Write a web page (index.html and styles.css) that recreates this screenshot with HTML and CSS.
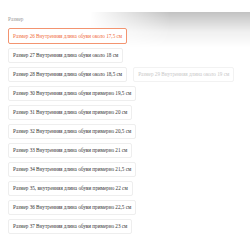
FILE: index.html
```html
<!DOCTYPE html>
<html lang="ru">
<head>
    <meta charset="UTF-8">
    <meta name="viewport" content="width=device-width, initial-scale=1.0">
    <title>Размер</title>
    <link rel="stylesheet" href="styles.css">
</head>
<body>
    <div class="shade"></div>
    <div class="sku">
        <div class="sku-title">Размер</div>
        <div class="sku-list">
            <div class="sku-item active">Размер 26 Внутренняя длина обуви около 17,5 см</div>
            <div class="sku-item">Размер 27 Внутренняя длина обуви около 18 см</div>
            <div class="sku-item">Размер 28 Внутренняя длина обуви около 18,5 см</div>
            <div class="sku-item disabled">Размер 29 Внутренняя длина около 19 см</div>
            <div class="sku-item">Размер 30 Внутренняя длина обуви примерно 19,5 см</div>
            <div class="sku-item">Размер 31 Внутренняя длина обуви примерно 20 см</div>
            <div class="sku-item">Размер 32 Внутренняя длина обуви примерно 20,5 см</div>
            <div class="sku-item">Размер 33 Внутренняя длина обуви примерно 21 см</div>
            <div class="sku-item">Размер 34 Внутренняя длина обуви примерно 21,5 см</div>
            <div class="sku-item">Размер 35, внутренняя длина обуви примерно 22 см</div>
            <div class="sku-item">Размер 36 Внутренняя длина обуви примерно 22,5 см</div>
            <div class="sku-item">Размер 37 Внутренняя длина обуви примерно 23 см</div>
        </div>
    </div>
</body>
</html>
```

FILE: styles.css
```css
*{
    box-sizing: border-box;
}
body{
    margin: 0;
    padding: 16px 8px 0 8px;
    background-color: #fff;
    font-family: "Liberation Serif", "Times New Roman", serif;
    position: relative;
}
.shade{
    position: absolute;
    top: 12px;
    left: 90px;
    right: 0;
    height: 36px;
    background: linear-gradient(to bottom, rgba(0,0,0,0.24), rgba(0,0,0,0.06) 55%, rgba(0,0,0,0));
    -webkit-mask-image: linear-gradient(to right, transparent, #000 50%);
    mask-image: linear-gradient(to right, transparent, #000 50%);
}
.sku{
    position: relative;
    width: 236px;
}
.sku-title{
    font-size: 5.2px;
    color: #999;
    margin-bottom: 6px;
}
.sku-list{
    display: flex;
    flex-wrap: wrap;
    row-gap: 4px;
    column-gap: 6px;
}
.sku-item{
    font-size: 5.2px;
    color: #333;
    background-color: #fff;
    border: 1px solid #eee;
    border-radius: 2px;
    padding: 0 4px;
    height: 15px;
    line-height: 13px;
    white-space: nowrap;
}
.sku-item.active{
    color: #f06a3a;
    border: 1px solid #f39470;
    height: 16px;
    line-height: 14px;
}
.sku-item.disabled{
    color: #c8c8c8;
    border-color: #f2f2f2;
}
```
